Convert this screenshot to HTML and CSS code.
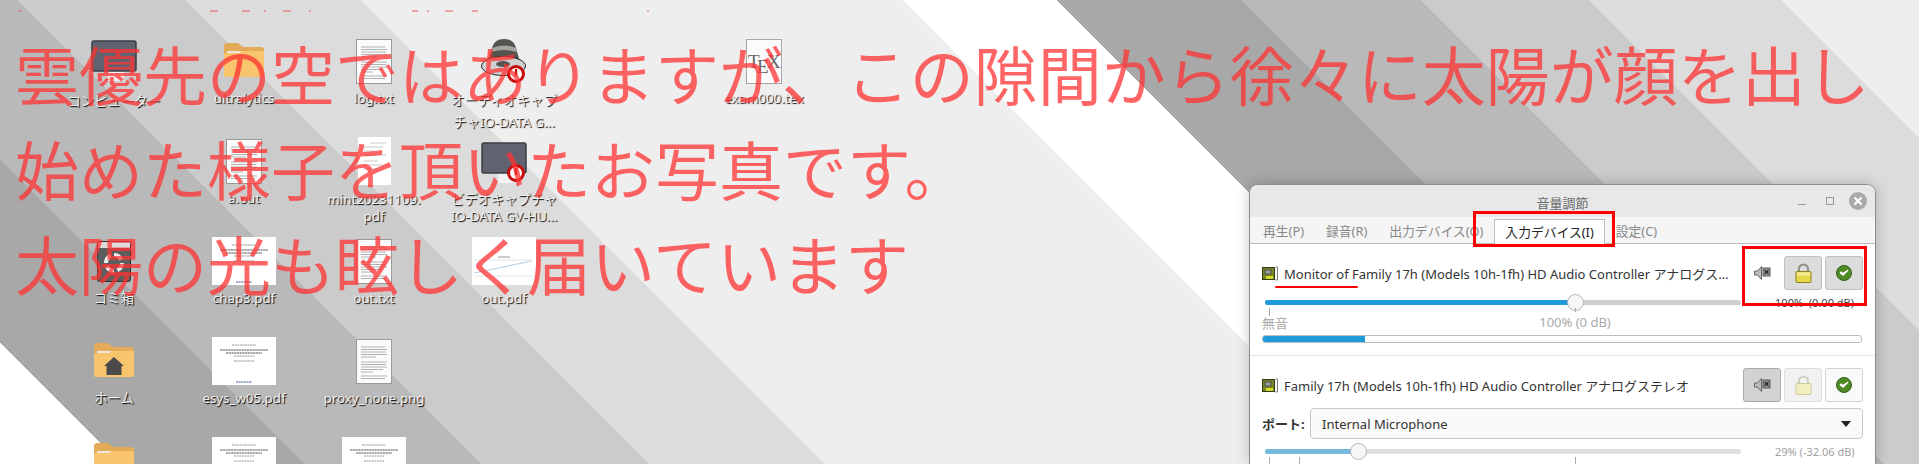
FILE: index.html
```html
<!DOCTYPE html>
<html lang="ja">
<head>
<meta charset="utf-8">
<title>音量調節</title>
<link rel="stylesheet" href="styles.css">
</head>
<body>
<svg class="defs" width="0" height="0">
  <defs>
    <g id="doc">
      <rect x="0.5" y="0.5" width="35" height="44" fill="#fbfbfb" stroke="#9a9a9a"/>
      <path d="M5 8h24M5 10.500h26M5 13h25M5 15.500h26M5 18h15M5 23h26M5 25.500h25M5 28h26M5 30.500h22M5 33h12M5 37h26M5 39.500h24" stroke="#a8a8a8" stroke-width=".9" fill="none"/>
    </g>
    <g id="slide">
      <rect width="64" height="48" fill="#fff"/>
      <path d="M20 8h24M22 19h20M22 24h20" stroke="#999" stroke-width="1" stroke-dasharray="2 .6" fill="none"/>
      <path d="M8 13h48M14 16h36" stroke="#555" stroke-width="1" stroke-dasharray="2.200 .5" fill="none"/>
      <path d="M24 45h16" stroke="#7f90bd" stroke-width="1.400" stroke-dasharray="2 .6"/>
    </g>
    <g id="folder">
      <path d="M0 3q0-3 3-3h11l5 4h18q3 0 3 3v10H0z" fill="#e3ab57"/>
      <rect x="3" y="8" width="34" height="12" fill="#eee8dc"/>
      <path d="M0 11q0-1 1-1h14l3-2h21q1 0 1 1v24q0 1-3 1H3q-3 0-3-1z" fill="#f8c46c"/>
    </g>
    <g id="monitor">
      <rect x="17" y="28" width="16" height="13" fill="#f2f2f2"/>
      <rect x="1" y="1" width="44" height="30" rx="2" fill="#60636f" stroke="#3b3e47" stroke-width="1.500"/>
    </g>
    <g id="badge">
      <circle cx="9" cy="9" r="7.500" fill="#fff" stroke="#c80a0a" stroke-width="3"/>
      <path d="M9 4v7" stroke="#c80a0a" stroke-width="2.400"/>
    </g>
    <g id="card">
      <rect x="0.500" y="1.500" width="12" height="12" fill="#76852a" stroke="#33390f"/>
      <rect x="3" y="4" width="6" height="4" fill="#9aa0a0" stroke="#333" stroke-width=".7"/>
      <rect x="4" y="10" width="7" height="3" fill="#d9d92c"/>
      <path d="M13.500 1h2v13h-2" fill="#eee" stroke="#666" stroke-width=".8"/>
    </g>
    <g id="speaker">
      <path d="M.5 6h3l4-4.500v13l-4-4.500h-3z" fill="#bbb" stroke="#666"/>
      <rect x="9" y="3" width="7" height="8" fill="#999" stroke="#555"/>
      <path d="M10.500 5l4 4m0-4l-4 4" stroke="#222" stroke-width="1.200"/>
    </g>
    <g id="lock">
      <path d="M4 9V6a4.500 4.500 0 0 1 9 0v3" fill="none" stroke="#8d8d80" stroke-width="2"/>
      <rect x="1" y="8.500" width="15" height="11" rx="1" fill="#e6d84a" stroke="#8f8320"/>
      <rect x="2" y="9.500" width="13" height="3" fill="#f5ed9a"/>
    </g>
    <g id="lockoff">
      <path d="M4 9V6a4.500 4.500 0 0 1 9 0v3" fill="none" stroke="#cfcfc8" stroke-width="2"/>
      <rect x="1" y="8.500" width="15" height="11" rx="1" fill="#f4efc0" stroke="#cfc99a"/>
    </g>
    <g id="check">
      <circle cx="8" cy="8" r="7.500" fill="#4f8a25" stroke="#2f5f12"/>
      <path d="M3.500 8l3.500 3 5.500-5.500-1-.8-4.500 3-2-1.500z" fill="#fff"/>
    </g>
  </defs>
</svg>

<main class="desktop">
  <div class="item">
    <div class="icon"><svg width="46" height="42"><use href="#monitor"/></svg></div>
    <div class="label label-low">コンピューター</div>
  </div>
  <div class="item">
    <div class="icon"><svg width="40" height="36"><use href="#folder"/></svg></div>
    <div class="label">ultralytics</div>
  </div>
  <div class="item">
    <div class="icon"><svg width="36" height="45"><use href="#doc"/></svg></div>
    <div class="label">log.txt</div>
  </div>
  <div class="item">
    <div class="icon">
      <svg width="46" height="46" viewBox="0 0 46 46">
        <path d="M6 24q3-7 5-14 2-9 12-9t12 9q2 7 4 14z" fill="#55554f"/>
        <path d="M11 10q12-5 24 0l1 4q-13-4-26 0z" fill="#a5a5a0"/>
        <ellipse cx="22.500" cy="28" rx="22" ry="9.500" fill="#d0d0d0" stroke="#222"/>
        <ellipse cx="22" cy="26" rx="7" ry="3" fill="#555"/>
        <use href="#badge" x="26" y="27"/>
      </svg>
    </div>
    <div class="label label-tall">オーディオキャプ<br>チャIO-DATA G...</div>
  </div>
  <div class="gap"></div>
  <div class="item">
    <div class="icon">
      <svg width="36" height="45">
        <rect x="0.500" y="0.500" width="35" height="44" fill="#fbfbfb" stroke="#a5a5a5"/>
        <text class="tex" x="2" y="29">T</text>
        <text class="tex" x="11" y="34">E</text>
        <text class="tex" x="21" y="29">X</text>
      </svg>
    </div>
    <div class="label">exam000.tex</div>
  </div>

  <div class="gap"></div>
  <div class="item">
    <div class="icon"><svg width="36" height="45"><use href="#doc"/></svg></div>
    <div class="label">a.out</div>
  </div>
  <div class="item">
    <div class="icon">
      <svg width="33" height="48">
        <rect width="33" height="48" fill="#fff"/>
        <path d="M12 6h16M5 10h20M6 14h10M6 18h22M6 24h14M6 28h18M6 32h12" stroke="#bbb" stroke-width=".8"/>
      </svg>
    </div>
    <div class="label label-two">mint20231109.<br>pdf</div>
  </div>
  <div class="item">
    <div class="icon">
      <svg width="46" height="46" viewBox="0 0 46 46">
        <use href="#monitor" y="4"/>
        <use href="#badge" x="26" y="26"/>
      </svg>
    </div>
    <div class="label label-two">ビデオキャプチャ<br>IO-DATA GV-HU...</div>
  </div>
  <div class="gap"></div>
  <div class="gap"></div>

  <div class="item">
    <div class="icon">
      <svg width="34" height="41" viewBox="0 0 34 41">
        <rect x=".5" y=".5" width="33" height="40" rx="2" fill="#5d5d5d" stroke="#2f2f2f"/>
        <rect x="1" y="1" width="32" height="6" fill="#dcdcdc"/>
        <circle cx="17" cy="22" r="8" fill="none" stroke="#eee" stroke-width="4" stroke-dasharray="9 3.500"/>
      </svg>
    </div>
    <div class="label">ゴミ箱</div>
  </div>
  <div class="item">
    <div class="icon"><svg width="64" height="48"><use href="#slide"/></svg></div>
    <div class="label">chap3.pdf</div>
  </div>
  <div class="item">
    <div class="icon"><svg width="36" height="45"><use href="#doc"/></svg></div>
    <div class="label">out.txt</div>
  </div>
  <div class="item">
    <div class="icon">
      <svg width="64" height="48">
        <rect width="64" height="48" fill="#fff"/>
        <path d="M2 36L60 24" stroke="#b9d4e6" stroke-width="1.200"/>
        <path d="M2 39H60M2 23H60" stroke="#dddddd" stroke-width=".8"/>
        <path d="M26 20h12" stroke="#999" stroke-width="1"/>
      </svg>
    </div>
    <div class="label">out.pdf</div>
  </div>
  <div class="gap"></div>
  <div class="gap"></div>

  <div class="item">
    <div class="icon">
      <svg width="40" height="36" viewBox="0 0 40 36">
        <use href="#folder"/>
        <path d="M20 14l10 9h-2.500v9h-15v-9H10z" fill="#4a4a4a"/>
      </svg>
    </div>
    <div class="label">ホーム</div>
  </div>
  <div class="item">
    <div class="icon"><svg width="64" height="48"><use href="#slide"/></svg></div>
    <div class="label">esys_w05.pdf</div>
  </div>
  <div class="item">
    <div class="icon"><svg width="36" height="45"><use href="#doc"/></svg></div>
    <div class="label">proxy_none.png</div>
  </div>
  <div class="gap"></div>
  <div class="gap"></div>
  <div class="gap"></div>

  <div class="item">
    <div class="icon"><svg width="40" height="36"><use href="#folder"/></svg></div>
  </div>
  <div class="item">
    <div class="icon"><svg width="64" height="48"><use href="#slide"/></svg></div>
  </div>
  <div class="item">
    <div class="icon"><svg width="64" height="48"><use href="#slide"/></svg></div>
  </div>
</main>

<svg class="cut-line" width="700" height="2">
  <path d="M19 1h3M210 1h8M242 1h8M264 1h2M283 1h8M309 1h2M412 1h6M427 1h2M445 1h8M472 1h6M647 1h2" stroke="#f05a5a" stroke-width="1.200"/>
</svg>

<p class="caption">雲優先の空ではありますが、この隙間から徐々に太陽が顔を出し<br>始めた様子を頂いたお写真です。<br>太陽の光も眩しく届いています</p>

<section class="window">
  <header class="titlebar">
    <span class="title">音量調節</span>
    <div class="controls">
      <span class="ctl-min"></span>
      <span class="ctl-max"></span>
      <span class="ctl-close">
        <svg width="10" height="10"><path d="M1.500 1.500l7 7m0-7l-7 7" stroke="#fff" stroke-width="2.200"/></svg>
      </span>
    </div>
  </header>
  <nav class="tabs">
    <span class="tab">再生(P)</span>
    <span class="tab">録音(R)</span>
    <span class="tab">出力デバイス(O)</span>
    <span class="tab tab-active">入力デバイス(I)</span>
    <span class="tab">設定(C)</span>
  </nav>
  <div class="content">
    <div class="device device-first">
      <div class="dev-head">
        <svg class="card" width="16" height="15"><use href="#card"/></svg>
        <span class="dev-name dev-name-long">Monitor of Family 17h (Models 10h-1fh) HD Audio Controller アナログステレオ</span>
        <svg class="spk" width="17" height="16"><use href="#speaker"/></svg>
        <button class="btn btn-on"><svg width="17" height="20"><use href="#lock"/></svg></button>
        <button class="btn btn-on"><svg width="16" height="16"><use href="#check"/></svg></button>
      </div>
      <div class="slider-row">
        <div class="slider">
          <div class="track"><div class="fill" style="width:65.1%"></div></div>
          <div class="knob" style="left:65.1%"></div>
          <div class="ticks">
            <i class="tick tick-long" style="left:4px"></i>
            <i class="tick" style="left:310px"></i>
          </div>
        </div>
        <span class="db db-dark">100%&nbsp; (0.00 dB)</span>
      </div>
      <div class="marks">
        <span class="mark-mute">無音</span>
        <span class="mark-full">100% (0 dB)</span>
      </div>
      <div class="level"><div class="level-fill" style="width:17%"></div></div>
    </div>
    <div class="device">
      <div class="dev-head">
        <svg class="card" width="16" height="15"><use href="#card"/></svg>
        <span class="dev-name">Family 17h (Models 10h-1fh) HD Audio Controller アナログステレオ</span>
        <button class="btn btn-pressed"><svg width="17" height="16"><use href="#speaker"/></svg></button>
        <button class="btn btn-disabled"><svg width="17" height="20"><use href="#lockoff"/></svg></button>
        <button class="btn btn-plain"><svg width="16" height="16"><use href="#check"/></svg></button>
      </div>
      <div class="port-row">
        <span class="port-label">ポート:</span>
        <div class="combo"><span>Internal Microphone</span><i class="arrow"></i></div>
      </div>
      <div class="slider-row">
        <div class="slider slider-soft">
          <div class="track"><div class="fill fill-soft" style="width:19.5%"></div></div>
          <div class="knob" style="left:19.5%"></div>
          <div class="ticks">
            <i class="tick tick-long" style="left:4px"></i>
            <i class="tick tick-long" style="left:34px"></i>
            <i class="tick tick-long" style="left:310px"></i>
          </div>
        </div>
        <span class="db">29% (-32.06 dB)</span>
      </div>
    </div>
  </div>
</section>

<div class="mark mark-tab"></div>
<div class="mark mark-buttons"></div>
<div class="mark-line"></div>
</body>
</html>
```
FILE: styles.css
```css
* { box-sizing: border-box; }

html, body {
  margin: 0;
  width: 1919px;
  height: 464px;
  overflow: hidden;
}

body {
  position: relative;
  font-family: "Noto Sans", "Noto Sans CJK JP", sans-serif;
  background: linear-gradient(45deg,
    #ffffff 85.6px,
    #a8a8a8 85.6px 215px,
    #b9b9b9 215px 340.8px,
    #cbcbcb 340.8px 459.6px,
    #dcdcdc 459.6px 582.7px,
    #eeeeee 582.7px 966.6px,
    #ffffff 966.6px 1075.5px,
    #a8a8a8 1075.5px 1206.3px,
    #b9b9b9 1206.3px 1332.2px,
    #cbcbcb 1332.2px 1451px,
    #dcdcdc 1451px 1587.5px,
    #eeeeee 1587.5px);
}

.defs { position: absolute; }

/* Desktop icons */
.desktop {
  display: grid;
  grid-template-columns: repeat(6, 130px);
  grid-auto-rows: 100px;
  height: 464px;
  overflow: hidden;
  padding: 34px 0 0 49px;
}

.item {
  display: flex;
  flex-direction: column;
  align-items: center;
}

.icon {
  flex: none;
  height: 54px;
  display: flex;
  align-items: center;
  justify-content: center;
}

.label {
  width: 124px;
  margin-top: 1px;
  text-align: center;
  font-size: 13.3px;
  line-height: 18px;
  color: #f0f0f0;
  text-shadow: 1px 1px 1px #000;
  white-space: nowrap;
}

.label-low { margin-top: 4px; }

.label-two { line-height: 17px; margin-top: 3px; }

.label-tall { line-height: 22px; margin-top: 1px; }

.tex {
  font-family: "Liberation Serif", serif;
  font-size: 19px;
  fill: #666;
}

/* Overlaid caption */
.cut-line {
  position: absolute;
  left: 0;
  top: 10px;
}

.caption {
  position: absolute;
  left: 15px;
  top: 25px;
  margin: 0;
  font-family: "Noto Sans CJK JP", sans-serif;
  font-weight: 400;
  font-size: 64px;
  line-height: 95px;
  white-space: nowrap;
  color: rgba(255, 50, 50, 0.75);
}

/* Sound window */
.window {
  position: absolute;
  left: 1249px;
  top: 184px;
  width: 627px;
  height: 280px;
  border: 1px solid #8d8d8d;
  border-bottom: 0;
  border-radius: 9px 9px 0 0;
  background: #fff;
  box-shadow: 0 0 14px rgba(0, 0, 0, 0.22);
  overflow: hidden;
  font-size: 13px;
  color: #333;
}

.titlebar {
  height: 32px;
  background: #e8e8e8;
  position: relative;
  display: flex;
  align-items: center;
  justify-content: center;
}

.title { color: #6a6a6a; font-size: 13px; margin-top: 3px; }

.controls {
  position: absolute;
  right: 8px;
  top: 7px;
  display: flex;
  align-items: center;
}

.ctl-min { width: 8px; height: 1px; background: #999; margin: 7px 20px 0 0; }

.ctl-max { width: 8px; height: 8px; border: 1px solid #999; margin-right: 15px; }

.ctl-close {
  width: 18px;
  height: 18px;
  border-radius: 50%;
  background: #a9a9a9;
  display: flex;
  align-items: center;
  justify-content: center;
}

.tabs {
  display: flex;
  align-items: flex-end;
  height: 27px;
  padding-left: 2px;
  background: #f5f5f5;
  border-bottom: 1px solid #bdbdbd;
}

.tab {
  height: 24px;
  padding: 0 11px;
  line-height: 25px;
  color: #888;
  font-size: 12.8px;
  white-space: nowrap;
}

.tab-active {
  height: 25px;
  margin-bottom: -1px;
  padding: 0 10px;
  background: #fff;
  color: #222;
  border: 1px solid #bdbdbd;
  border-bottom: 0;
}

.device { padding: 12px 12px 0; }

.device-first {
  height: 112px;
  border-bottom: 1px solid #e4e4e4;
}

.dev-head {
  display: flex;
  align-items: center;
  height: 34px;
}

.card { flex: none; margin-right: 6px; }

.dev-name {
  flex: 1;
  min-width: 0;
  white-space: nowrap;
  overflow: hidden;
  text-overflow: ellipsis;
  font-size: 13px;
  color: #333;
}

.dev-name-long { flex: none; width: 448px; }

.spk { margin: 0 10px 0 22px; flex: none; }

.btn {
  flex: none;
  width: 38px;
  height: 34px;
  margin-left: 3px;
  padding: 0;
  border: 1px solid #bfbfbf;
  border-radius: 3px;
  background: #dcdcdc;
  display: flex;
  align-items: center;
  justify-content: center;
}

.btn-pressed { background: #d2d2d2; border-color: #a9a9a9; }

.btn-disabled { background: #f1f1f1; border-color: #dcdcdc; }

.btn-plain { background: #fafafa; border-color: #d0d0d0; }

.slider-row {
  display: flex;
  align-items: center;
  height: 14px;
  margin-top: 5px;
  padding-left: 3px;
}

.slider { width: 476px; height: 5px; position: relative; flex: none; }

.track {
  height: 5px;
  border-radius: 3px;
  background: #cfcfcf;
  overflow: hidden;
}

.slider-soft .track { background: #e0e0e0; }

.fill { height: 100%; background: #1e9bdb; }

.fill-soft { background: #74b8dc; }

.knob {
  position: absolute;
  top: -6px;
  width: 17px;
  height: 17px;
  margin-left: -8px;
  border-radius: 50%;
  background: #f6f6f6;
  border: 1px solid #b5b5b5;
}

.ticks { position: absolute; left: 0; top: 8px; width: 100%; }

.tick {
  position: absolute;
  top: 0;
  width: 1px;
  height: 4px;
  background: #aaa;
}

.tick-long { height: 8px; }

.db {
  margin-left: 34px;
  width: 79px;
  text-align: right;
  font-size: 11px;
  color: #a0a0a0;
  white-space: nowrap;
}

.db-dark { color: #445; }

.marks {
  position: relative;
  height: 20px;
  margin-top: 4px;
  color: #aaa;
  font-size: 13px;
  line-height: 20px;
}

.mark-full {
  position: absolute;
  left: 313px;
  top: -1px;
  width: 0;
  display: flex;
  justify-content: center;
  white-space: nowrap;
}

.level {
  height: 8px;
  margin-top: 2px;
  border: 1px solid #bdbdbd;
  border-radius: 3px;
  background: #fff;
  overflow: hidden;
  width: 600px;
}

.level-fill { height: 100%; background: #1e9bdb; }

.port-row {
  display: flex;
  align-items: center;
  margin-top: 6px;
  height: 31px;
}

.port-label {
  width: 48px;
  font-weight: 700;
  font-size: 13px;
  color: #333;
}

.combo {
  flex: 1;
  height: 31px;
  display: flex;
  align-items: center;
  justify-content: space-between;
  padding: 0 11px;
  background: #fafafa;
  border: 1px solid #c8c8c8;
  border-radius: 4px;
}

.arrow {
  width: 0;
  height: 0;
  border-left: 5px solid transparent;
  border-right: 5px solid transparent;
  border-top: 6px solid #222;
}

/* Red annotations */
.mark {
  position: absolute;
  border: 3px solid #f00;
}

.mark-tab { left: 1473px; top: 211px; width: 142px; height: 36px; }

.mark-buttons { left: 1742px; top: 246px; width: 125px; height: 60px; }

.mark-line {
  position: absolute;
  left: 1275px;
  top: 286px;
  width: 83px;
  height: 2px;
  background: #f00;
  border-radius: 1px;
}
```
